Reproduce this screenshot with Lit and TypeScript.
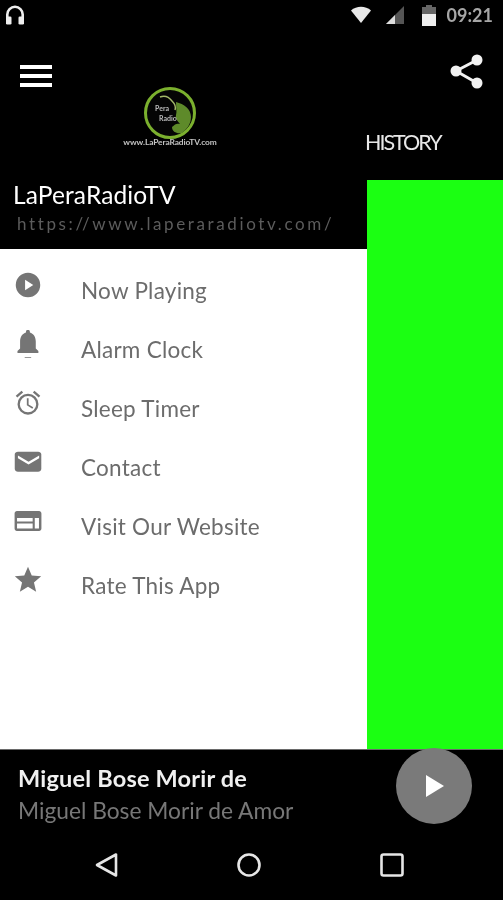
import { LitElement, html, css, svg } from "lit";
import { customElement } from "lit/decorators.js";

const menu = [
  { label: "Now Playing", icon: svg`<path fill-rule="evenodd" d="M12 1.500a10.500 10.500 0 1 0 0 21 10.500 10.500 0 0 0 0-21zM9.500 7.500v9l7-4.500z"/>` },
  { label: "Alarm Clock", icon: svg`<path d="M12 24c1.400 0 2.500-1.100 2.500-2.300h-5C9.500 22.900 10.600 24 12 24zM20 18.500v-1.500l-2-2v-5.500c0-3.300-1.900-6-4.500-6.700V2.200C13.500 1.300 12.800.600 12 .600s-1.500.7-1.500 1.600v.6C7.900 3.500 6 6.200 6 9.500V15l-2 2v1.500z" transform="translate(-1.500 -1) scale(1.120)"/>` },
  { label: "Sleep Timer", icon: svg`<path d="M22.500 5.700 17.500 1.500l-1.300 1.500 5 4.200zM7.800 3 6.500 1.500 1.500 5.700l1.300 1.500zM12.500 8H11v6l4.700 2.900.8-1.200-4-2.400zM12 4a9 9 0 1 0 0 18 9 9 0 0 0 0-18zm0 16a7 7 0 1 1 0-14 7 7 0 0 1 0 14z"/>` },
  { label: "Contact", icon: svg`<path fill-rule="evenodd" d="M2.500 3h19C23 3 24.500 4 24.500 5.500v14c0 1.500-1.500 2.500-3 2.500h-19C1 22-.5 21-.5 19.500v-14C-.5 4 1 3 2.500 3zM2.500 6.500v2.700l10 6 10-6V6.500l-10 6z" transform="translate(1.100 .5) scale(.91 .9)"/>` },
  { label: "Visit Our Website", icon: svg`<path fill-rule="evenodd" d="M2.500 3.500h19c1.100 0 2 .9 2 2v13c0 1.100-.9 2-2 2h-19c-1.100 0-2-.9-2-2v-13c0-1.100.9-2 2-2zM2.600 9.500v2.900h13.400V9.500zm15.200 0v9h3.600v-9zM2.600 14.200v4.300h13.400v-4.300z"/>` },
  { label: "Rate This App", icon: svg`<path d="M12 17.800l7 4.200-1.900-7.900 6.200-5.300-8.100-.7L12 .6 8.800 8.100l-8.100.7 6.200 5.300L5 22z"/>` },
];

@customElement("app-root")
export class AppRoot extends LitElement {
  static styles = css`
    :host { display: block; width: 503px; height: 900px; background: #000; overflow: hidden; }
    .screen { width: 503px; height: 900px; display: flex; flex-direction: column; background: #000; filter: blur(0.7px); font-family: "Lato", "Open Sans", sans-serif; }
    .status { height: 32px; flex: none; display: flex; align-items: center; padding: 0 10px 2px 5px; box-sizing: border-box; color: #a6a6a6; font-size: 18px; font-weight: 700; }
    .status svg { display: block; flex: none; }
    .phones { width: 20px; height: 22px; margin-right: auto; }
    .wifi { width: 20px; height: 18px; margin-right: 15px; }
    .signal { width: 18px; height: 18px; margin-right: 18px; }
    .batt { width: 14px; height: 21px; margin-right: 11px; }
    .main { display: flex; height: 717px; flex: none; }
    .drawer { width: 367px; flex: none; display: flex; flex-direction: column; background: #fff; }
    .drawer-head { height: 217px; flex: none; background: #000; color: #fff; display: flex; flex-direction: column; }
    .hamburger { margin: 33px 0 0 20px; width: 32px; height: 22px; display: flex; flex-direction: column; justify-content: space-between; }
    .hamburger i { display: block; height: 4px; background: #fff; }
    .logo { margin: -1px 0 0 122px; width: 96px; height: 63px; display: flex; flex-direction: column; align-items: center; }
    .logo svg { width: 54px; height: 54px; display: block; flex: none; }
    .logo span { font-size: 8.400px; font-weight: 700; color: #c4c4c4; line-height: 9px; white-space: nowrap; letter-spacing: -0.100px; margin-top: -2px; }
    .brand { margin: 32px 0 0 13px; font-size: 24.500px; line-height: 28px; color: #fff; letter-spacing: 0.120px; }
    .url { margin: 5px 0 0 17px; font-size: 17px; line-height: 20px; color: #5c5c5c; letter-spacing: 2.620px; white-space: nowrap; }
    .list { flex: 1; display: flex; flex-direction: column; padding-top: 12px; }
    .row { height: 59px; display: flex; align-items: center; color: #6c6c6c; font-size: 22.500px; }
    .row svg { width: 28px; height: 28px; margin: -12px 0 0 14px; fill: #757575; flex: none; }
    .row span { margin-left: 39px; letter-spacing: 0.250px; white-space: nowrap; }
    .side { flex: 1; display: flex; flex-direction: column; background: #000; }
    .side-head { height: 148px; flex: none; display: flex; flex-direction: column; color: #fff; }
    .share { width: 36px; height: 38px; margin: 21px 0 0 82px; fill: #f2f2f2; display: block; flex: none; }
    .history { margin: 39px 0 0 -2px; font-size: 21.500px; line-height: 24px; letter-spacing: -2px; color: #e8e8e8; white-space: nowrap; }
    .green { flex: 1; background: #1bff12; }
    .player { height: 75px; flex: none; box-sizing: border-box; border-top: 1px solid #6a6a6a; display: flex; align-items: flex-start; justify-content: space-between; padding-left: 18px; padding-right: 31px; background: #000; }
    .meta { display: flex; flex-direction: column; padding-top: 12px; }
    .title { font-size: 23.500px; font-weight: 700; line-height: 32px; color: #f0f0f0; white-space: nowrap; letter-spacing: 0.200px; }
    .sub { font-size: 22.750px; line-height: 33px; color: #777; white-space: nowrap; }
    .fab { width: 76px; height: 76px; margin-top: -2px; border-radius: 50%; background: #7a7a7a; display: flex; align-items: center; justify-content: center; }
    .fab svg { width: 18px; height: 22px; fill: #fff; margin-left: 2px; display: block; }
    .nav { flex: 1; display: flex; align-items: center; padding-top: 6px; }
    .nav svg { width: 26px; height: 26px; fill: none; stroke: #e6e6e6; stroke-width: 2.600px; flex: none; display: block; }
    .nav .back { margin-left: 94px; }
    .nav .home { margin-left: 116px; }
    .nav .recent { margin-left: 117px; }
  `;

  render() {
    return html`
      <div class="screen">
        <div class="status">
          <svg class="phones" viewBox="0 0 20 22"><path fill="none" stroke="#eee" stroke-width="2.600" d="M2.300 15V10.500a7.700 7.700 0 0 1 15.400 0V15"/><rect x="1" y="12.500" width="5.500" height="8" rx="1.300" fill="#eee"/><rect x="13.500" y="12.500" width="5.500" height="8" rx="1.300" fill="#eee"/></svg>
          <svg class="wifi" viewBox="0 0 20 18"><path d="M0 4.500C5.500-.5 14.500-.5 20 4.500L10 17z" fill="#e8e8e8"/></svg>
          <svg class="signal" viewBox="0 0 18 18"><path d="M18 0v18H0z" fill="#555"/><path d="M9 9v9H0z" fill="#ddd"/></svg>
          <svg class="batt" viewBox="0 0 14 21"><path d="M4 0h6v2h4v19H0V2h4z" fill="#666"/><rect y="9" width="14" height="12" fill="#eee"/></svg>
          <span>09:21</span>
        </div>
        <div class="main">
          <div class="drawer">
            <div class="drawer-head">
              <div class="hamburger"><i></i><i></i><i></i></div>
              <div class="logo">
                <svg viewBox="0 0 54 54">
                  <circle cx="27" cy="27" r="24.500" fill="#050505" stroke="#7bb02e" stroke-width="3"/>
                  <path d="M33 16c8 2 15 7 15 15 0 7-4 12-9 16-5 1-10-1-10-6 3-3 5-4 8-3-2-3-5-5-4-9 1-3 0-8 0-13z" fill="#5e8a2a"/>
                  <path d="M17 11c5-2 9 0 12 4 3 3 4 6 3 9" fill="none" stroke="#a4b96a" stroke-width="1.500"/>
                  <text x="19" y="25" font-size="7" font-weight="700" fill="#bdbdbd" text-anchor="middle">Pera</text>
                  <text x="25" y="35" font-size="7" font-weight="700" fill="#bdbdbd" text-anchor="middle">Radio</text>
                </svg>
                <span>www.LaPeraRadioTV.com</span>
              </div>
              <div class="brand">LaPeraRadioTV</div>
              <div class="url">https://www.laperaradiotv.com/</div>
            </div>
            <div class="list">
              ${menu.map((m) => html`<div class="row"><svg viewBox="0 0 24 24">${m.icon}</svg><span>${m.label}</span></div>`)}
            </div>
          </div>
          <div class="side">
            <div class="side-head">
              <svg class="share" viewBox="0 0 36 38"><circle cx="28" cy="7" r="5.500"/><circle cx="7" cy="18" r="5.500"/><circle cx="28" cy="30" r="5.500"/><path d="M7 18 28 7M7 18l21 12" stroke="#f2f2f2" stroke-width="3" fill="none"/></svg>
              <div class="history">HISTORY</div>
            </div>
            <div class="green"></div>
          </div>
        </div>
        <div class="player">
          <div class="meta">
            <div class="title">Miguel Bose Morir de</div>
            <div class="sub">Miguel Bose Morir de Amor</div>
          </div>
          <div class="fab"><svg viewBox="0 0 18 22"><path d="M0 0v22l18-11z"/></svg></div>
        </div>
        <div class="nav">
          <svg class="back" viewBox="0 0 26 26"><path stroke-linejoin="round" d="M22 2.500v21L3 13z"/></svg>
          <svg class="home" viewBox="0 0 26 26"><circle cx="13" cy="13" r="10.500"/></svg>
          <svg class="recent" viewBox="0 0 26 26"><rect x="2.500" y="2.500" width="21" height="21" rx="2"/></svg>
        </div>
      </div>
    `;
  }
}
